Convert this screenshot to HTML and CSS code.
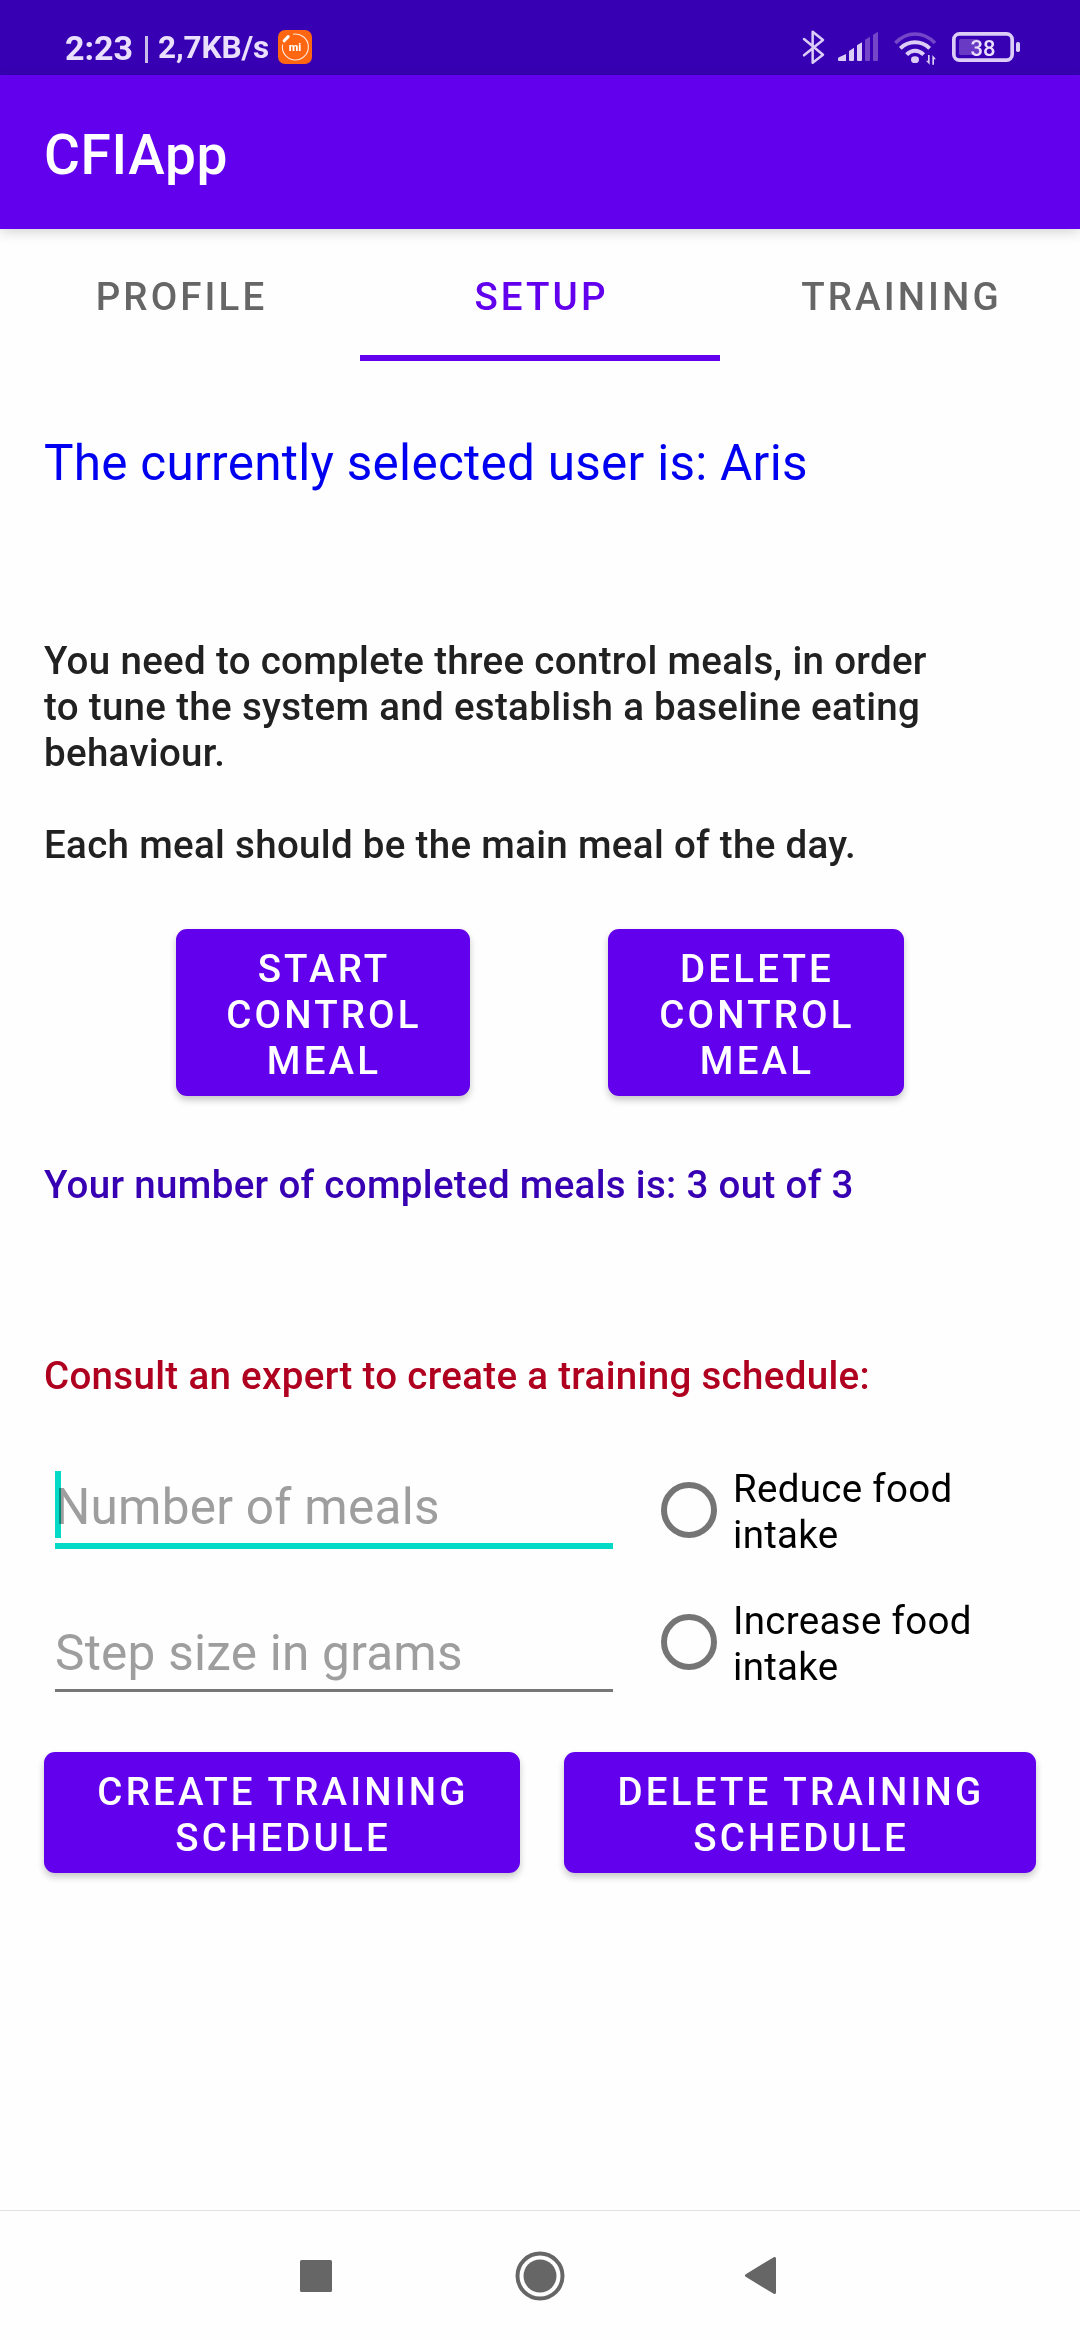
FILE: index.html
```html
<!DOCTYPE html>
<html lang="en">
<head>
<meta charset="utf-8">
<title>CFIApp</title>
<link rel="stylesheet" href="styles.css">
</head>
<body>
<div class="screen">
  <div class="status">
    <span class="clock">2:23</span>
    <span class="bar"></span>
    <span class="speed">2,7KB/s</span>
    <svg class="mi" width="34" height="34" viewBox="0 0 34 34">
      <rect width="34" height="34" rx="7" fill="#ff6611"/>
      <path d="M15 4.2A13 13 0 1 1 4.6 14.5" fill="none" stroke="#ffe9dc" stroke-width="1.1"/>
      <path d="M6.2 10.8l4-4.2" stroke="#fff" stroke-width="3" stroke-linecap="round"/>
      <text class="mi-label" x="17" y="20.6" text-anchor="middle">mi</text>
    </svg>
    <svg class="bt" width="24" height="38" viewBox="66 54 72 114">
      <path d="M72 87L129 134L98 158V65L129 90L72 136" fill="none" stroke="#dccdf7" stroke-width="7.5" stroke-linejoin="round" stroke-linecap="round"/>
    </svg>
    <svg class="signal" width="42" height="38" viewBox="171 54 126 114">
      <g fill="#dccdf7">
        <path d="M174 145q0-2 3-3.500L198 132v21H177q-3 0-3-3z"/>
        <path d="M207 123L222 113v37q0 3-3 3h-9q-3 0-3-3z"/>
        <path d="M231 106L246 97v53q0 3-3 3h-9q-3 0-3-3z"/>
      </g>
      <g fill="#7446c8">
        <path d="M255 89L270 80v70q0 3-3 3h-9q-3 0-3-3z"/>
        <path d="M279 74L294 65v85q0 3-3 3h-9q-3 0-3-3z"/>
      </g>
    </svg>
    <svg class="wifi" width="45" height="38" viewBox="339 54 135 114">
      <path d="M346 99Q372 72 405 72T465 99" fill="none" stroke="#7446c8" stroke-width="11"/>
      <path d="M361 115Q380 97 405 97T449 115" fill="none" stroke="#dccdf7" stroke-width="12"/>
      <path d="M380 134Q391 122 405 122T431 134" fill="none" stroke="#dccdf7" stroke-width="12"/>
      <ellipse cx="405" cy="149" rx="12" ry="10" fill="#dccdf7"/>
      <path d="M438 152h6v-17h5v29zM468 148h-6v16h-5v-29z" fill="#dccdf7"/>
    </svg>
    <svg class="battery" width="70" height="38" viewBox="513 54 210 114">
      <rect x="521.500" y="71.500" width="175" height="79" rx="17" fill="none" stroke="#dccdf7" stroke-width="11"/>
      <rect x="708" y="96" width="12" height="30" rx="5" fill="#dccdf7"/>
      <rect x="537" y="87" width="60" height="48" rx="5" fill="#693bc4"/>
      <text class="battery-label" x="609" y="137" text-anchor="middle">38</text>
    </svg>
  </div>
  <header class="toolbar"><h1 class="app-title">CFIApp</h1></header>
  <nav class="tabs">
    <span class="tab">PROFILE</span>
    <span class="tab active">SETUP</span>
    <span class="tab">TRAINING</span>
  </nav>
  <main class="content">
    <h2 class="user">The currently selected user is: Aris</h2>
    <div class="intro">
      <p>You need to complete three control meals, in order<br>to tune the system and establish a baseline eating<br>behaviour.</p>
      <p>Each meal should be the main meal of the day.</p>
    </div>
    <div class="meal-actions">
      <button class="btn">START<br>CONTROL<br>MEAL</button>
      <button class="btn">DELETE<br>CONTROL<br>MEAL</button>
    </div>
    <p class="count">Your number of completed meals is: 3 out of 3</p>
    <p class="consult">Consult an expert to create a training schedule:</p>
    <div class="form">
      <div class="fields">
        <div class="field focused"><span class="hint">Number of meals</span><i class="caret"></i></div>
        <div class="field"><span class="hint">Step size in grams</span></div>
      </div>
      <div class="options">
        <div class="option"><span class="radio"></span><span>Reduce food<br>intake</span></div>
        <div class="option"><span class="radio"></span><span>Increase food<br>intake</span></div>
      </div>
    </div>
    <div class="schedule-actions">
      <button class="btn">CREATE TRAINING<br>SCHEDULE</button>
      <button class="btn">DELETE TRAINING<br>SCHEDULE</button>
    </div>
  </main>
  <footer class="navbar">
    <svg width="32" height="32" viewBox="0 0 32 32"><rect width="32" height="32" rx="1.500" fill="#666"/></svg>
    <svg width="50" height="50" viewBox="0 0 50 50"><circle cx="25" cy="25" r="22.500" fill="none" stroke="#666" stroke-width="4"/><circle cx="25" cy="25" r="16.500" fill="#666"/></svg>
    <svg width="31" height="37" viewBox="0 0 31 37"><path d="M1.500 18.500L29.500 1.500V35.500z" fill="#666" stroke="#666" stroke-width="3" stroke-linejoin="round"/></svg>
  </footer>
</div>
</body>
</html>
```
FILE: styles.css
```css
* { box-sizing: border-box; margin: 0; padding: 0; }
body { background: #fefefe; font-family: Roboto, "Noto Sans", sans-serif; }
.screen {
  width: 1080px;
  height: 2340px;
  display: flex;
  flex-direction: column;
  font-size: 38.5px;
  line-height: 46px;
}
svg { display: block; flex: none; }

.status {
  height: 75px;
  flex: none;
  background: #3700b3;
  color: #eadffc;
  display: flex;
  align-items: flex-start;
  padding-left: 65px;
  white-space: nowrap;
}
.clock { width: 80px; margin-top: 28px; font-size: 34px; font-weight: 700; line-height: 40px; }
.bar { width: 3px; height: 27px; margin-top: 36px; background: #cbbdea; }
.speed { width: 119px; margin: 29px 0 0 10px; font-size: 31.5px; font-weight: 700; line-height: 38px; letter-spacing: -.1px; }
.mi { margin: 30px 0 0 1px; }
.mi-label { font-size: 11px; font-weight: 800; fill: #fff; }
.bt, .signal, .wifi, .battery { margin-top: 28px; }
.bt { margin-left: auto; }
.signal { margin-left: 11px; }
.wifi { margin-left: 14px; }
.battery { margin: 28px 59px 0 13px; }
.battery-label { font-size: 66px; font-weight: 500; fill: #eadffc; }

.toolbar {
  height: 154px;
  flex: none;
  background: #6200ee;
  box-shadow: 0 3px 12px rgba(0, 0, 0, .17);
  display: flex;
  align-items: center;
  padding-left: 44px;
}
.app-title { font-size: 55px; font-weight: 500; line-height: 64px; letter-spacing: .69px; color: #fff; padding-top: 6px; }

.tabs { height: 132px; flex: none; display: grid; grid-template-columns: repeat(3, 1fr); }
.tab {
  text-align: center;
  padding: 45px 0 0 3px;
  font-weight: 500;
  letter-spacing: 3.1px;
  color: #666;
}
.active { color: #6200ee; box-shadow: inset 0 -6px #6200ee; }

.content { flex: 1; padding: 73px 44px 0; }
.user { font-size: 49.5px; font-weight: 400; line-height: 58px; color: #0000f0; letter-spacing: .26px; }
.intro { margin-top: 146px; font-weight: 500; color: #212121; letter-spacing: .32px; }
.intro p + p { margin-top: 46px; }

.btn {
  display: block;
  border: 0;
  border-radius: 11px;
  background: #6200ee;
  color: #fff;
  font: 500 38.5px/46px Roboto, "Noto Sans", sans-serif;
  letter-spacing: 3.15px;
  text-align: center;
  padding: 17px 0 12px 2px;
  box-shadow: 0 4px 7px rgba(0, 0, 0, .22);
}
.meal-actions {
  margin-top: 61px;
  padding-left: 132px;
  display: grid;
  grid-template-columns: 294px 296px;
  column-gap: 138px;
}
.count { margin-top: 66px; font-weight: 500; color: #3700b3; letter-spacing: .32px; }
.consult { margin-top: 145px; font-weight: 500; color: #b00020; letter-spacing: .32px; }

.form { height: 353px; display: flex; padding-left: 11px; }
.fields { width: 558px; padding-top: 79px; }
.field {
  position: relative;
  height: 68px;
  border-bottom: 3px solid #777;
  font-size: 49.5px;
  line-height: 58px;
  letter-spacing: .25px;
  color: #9e9e9e;
}
.focused { height: 71px; border-bottom: 6px solid #03dac5; margin-bottom: 75px; }
.caret { position: absolute; left: 0; top: -7px; width: 6px; height: 67px; background: #03dac5; mix-blend-mode: multiply; }
.options { margin-left: 48px; padding-top: 67px; color: #000; letter-spacing: .3px; }
.option { display: flex; column-gap: 16px; margin-bottom: 40px; }
.radio { width: 56px; height: 56px; margin-top: 16px; border: 6px solid #757575; border-radius: 50%; }

.schedule-actions { display: grid; grid-template-columns: 476px 472px; column-gap: 44px; }

.navbar {
  height: 130px;
  flex: none;
  border-top: 1px solid #e3e3e3;
  display: flex;
  align-items: center;
  padding-left: 300px;
}
.navbar svg:nth-child(2) { margin: 0 180px 0 183px; }
```
